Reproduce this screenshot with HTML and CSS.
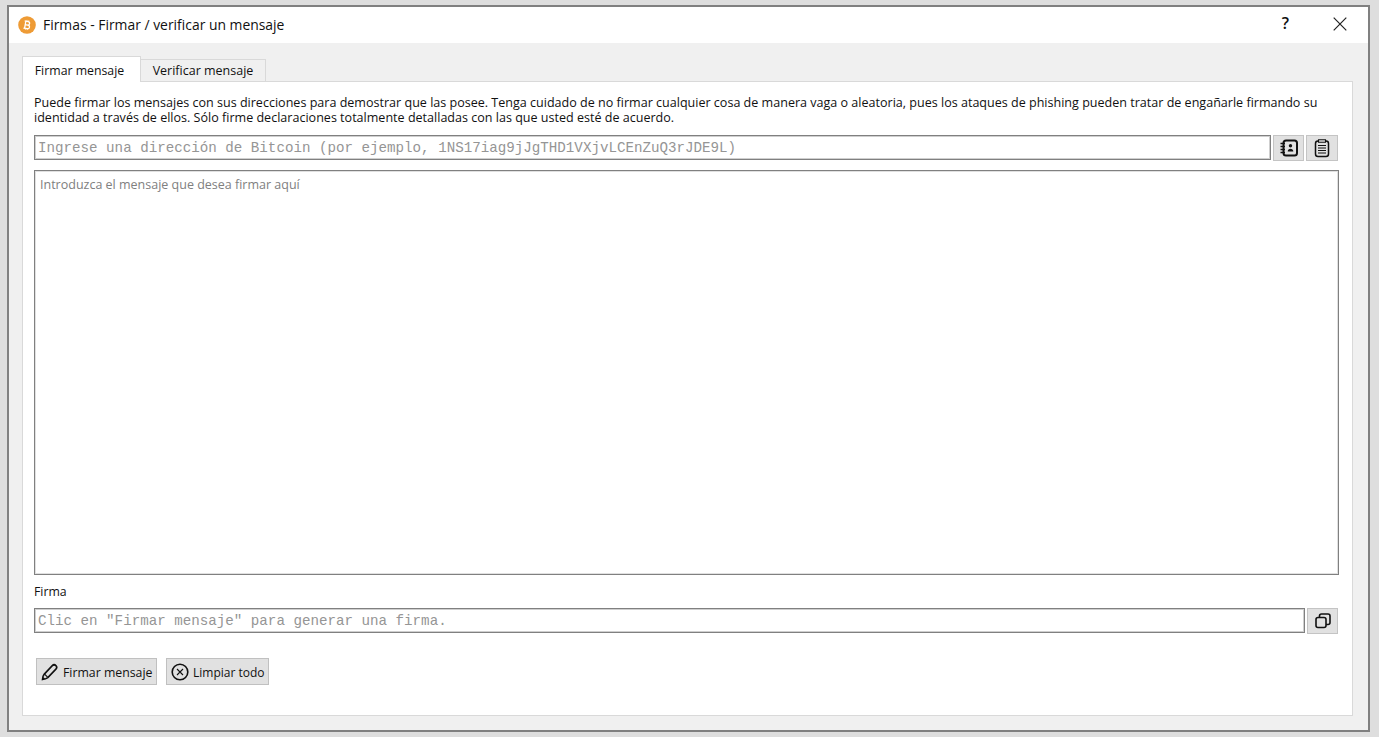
FILE: index.html
```html
<!DOCTYPE html>
<html lang="es">
<head>
<meta charset="utf-8">
<title>Firmas - Firmar / verificar un mensaje</title>
<link rel="stylesheet" href="styles.css">
</head>
<body>
<div class="window">
  <header class="titlebar">
    <svg class="app-icon" viewBox="0 0 18 18" width="18" height="18"><circle cx="9" cy="9" r="8.8" fill="#ee9b35"/><g transform="rotate(10 9 9)" fill="none" stroke="#fff" stroke-width="1.3"><path d="M7.2 5.2v7.6M6 5.4h3.5a1.8 1.8 0 0 1 0 3.6H7.2M7.2 9h2.8a1.8 1.8 0 0 1 0 3.6H6"/><path d="M8.2 4v1.4M10 4v1.4M8.2 12.6V14M10 12.6V14" stroke-width=".7"/></g></svg>
    <span class="title">Firmas - Firmar / verificar un mensaje</span>
    <span class="help">?</span>
    <svg class="close" viewBox="0 0 14 14" width="14" height="14"><path d="M.7.7l12.6 12.6M13.3.7L.7 13.3" stroke="#222" stroke-width="1.2" fill="none"/></svg>
  </header>
  <main class="content">
    <nav class="tabs">
      <div class="tab active">Firmar mensaje</div>
      <div class="tab">Verificar mensaje</div>
    </nav>
    <section class="pane">
      <p class="intro">Puede firmar los mensajes con sus direcciones para demostrar que las posee. Tenga cuidado de no firmar cualquier cosa de manera vaga o aleatoria, pues los ataques de phishing pueden tratar de engañarle firmando su identidad a través de ellos. Sólo firme declaraciones totalmente detalladas con las que usted esté de acuerdo.</p>
      <div class="row address-row">
        <div class="field mono">Ingrese una dirección de Bitcoin (por ejemplo, 1NS17iag9jJgTHD1VXjvLCEnZuQ3rJDE9L)</div>
        <button class="icon-btn" type="button">
          <svg viewBox="0 0 20 20" width="20" height="20" fill="none" stroke="#111"><rect x="4.5" y="2.5" width="13.5" height="15" rx="2.5" stroke-width="2"/><path d="M1.5 5.5h4.5M1.5 8.5h4.5M1.5 11.5h4.5M1.5 14.5h4.5" stroke-width="1.4"/><circle cx="11.5" cy="7.8" r="1.7" fill="#111" stroke="none"/><path d="M8.7 13.5c0-3.6 5.6-3.6 5.6 0z" fill="#111" stroke="none"/></svg>
        </button>
        <button class="icon-btn" type="button">
          <svg viewBox="0 0 20 20" width="20" height="20" fill="none" stroke="#111"><rect x="3.5" y="3" width="13" height="15.5" rx="2.5" stroke-width="1.5"/><path d="M6.5 1.8h7v2.4h-7z" fill="#e1e1e1" stroke-width="1.1"/><path d="M6 7.5h8M6 10h8M6 12.5h8M6 15h8" stroke-width="1"/></svg>
        </button>
      </div>
      <div class="message">Introduzca el mensaje que desea firmar aquí</div>
      <label class="sig-label">Firma</label>
      <div class="row sig-row">
        <div class="field mono">Clic en "Firmar mensaje" para generar una firma.</div>
        <button class="icon-btn" type="button">
          <svg viewBox="0 0 20 20" width="20" height="20" fill="none" stroke="#111" stroke-width="1.6"><rect x="3" y="6.5" width="10" height="10" rx="2"/><path d="M6.5 6.5V5a2 2 0 0 1 2-2H15a2 2 0 0 1 2 2v6.5a2 2 0 0 1-2 2h-2"/></svg>
        </button>
      </div>
      <div class="actions">
        <button class="btn btn-sign" type="button">
          <svg viewBox="0 0 18 18" width="18" height="18" fill="none" stroke="#111"><path d="M1.5 16.5c.1-2.2.8-4.2 1.8-5.4L11.3 2.6c1-1 2.6-1 3.6 0s1 2.5 0 3.5L6.8 14.6c-1.3 1-3.3 1.7-5.3 1.9z" stroke-width="1.6"/><path d="M3.6 11.2l3 3" stroke-width="1.2"/><path d="M1.5 16.5l2.6-.8-1.8-1.8z" fill="#111" stroke="none"/></svg>
          <span>Firmar mensaje</span>
        </button>
        <button class="btn btn-clear" type="button">
          <svg viewBox="0 0 18 18" width="18" height="18" fill="none" stroke="#111"><circle cx="9" cy="9" r="7.8" stroke-width="1.6"/><path d="M6 6l6 6M12 6l-6 6" stroke-width="1.1"/></svg>
          <span>Limpiar todo</span>
        </button>
      </div>
    </section>
  </main>
</div>
</body>
</html>
```
FILE: styles.css
```css
* { box-sizing: border-box; }
html, body { margin: 0; height: 100%; }
body {
  width: 1379px;
  height: 737px;
  overflow: hidden;
  padding: 5px 9px 5px 7px;
  background: #dedede;
  font-family: "Open Sans", "Liberation Sans", sans-serif;
  font-size: 12.3px;
  color: #111;
}
.window {
  width: 1363px;
  height: 727px;
  display: flex;
  flex-direction: column;
  border: 2px solid #808080;
  background: #f0f0f0;
}
.titlebar {
  height: 36px;
  flex: none;
  display: flex;
  align-items: center;
  padding: 0 21px 0 9px;
  background: #fff;
}
.app-icon { flex: none; }
.title { margin-left: 7px; font-size: 13.9px; flex: 1; position: relative; top: -1px; }
.help { font-size: 16px; font-weight: 600; margin-right: 44px; position: relative; top: -2px; }
.close { position: relative; top: -1px; }
.content { flex: 1; padding: 13px 15px 14px 13px; display: flex; flex-direction: column; min-height: 0; }
.tabs { display: flex; align-items: flex-end; height: 25px; flex: none; position: relative; z-index: 1; }
.tab {
  height: 22px;
  width: 125px;
  border: 1px solid #d9d9d9;
  border-bottom: 0;
  border-left: 0;
  background: #f0f0f0;
  font-size: 12.5px;
  text-align: center;
  line-height: 22px;
}
.tab.active {
  height: 26px;
  width: 119px;
  margin-bottom: -1px;
  background: #fff;
  border-left: 1px solid #d9d9d9;
  font-size: 12.3px;
  line-height: 27px;
  padding-right: 4px;
}
.pane {
  flex: 1;
  min-height: 0;
  background: #fff;
  border: 1px solid #d9d9d9;
  padding: 13px 14px 0 11px;
  display: flex;
  flex-direction: column;
}
.intro { margin: 0; font-size: 12.55px; line-height: 15px; height: 30px; width: 1290px; }
.row { display: flex; align-items: flex-start; gap: 2px; }
.address-row { margin-top: 10px; }
.field {
  flex: 1;
  height: 25px;
  border: 1px solid #808080;
  box-shadow: inset 0 0 0 1px #cfcfcf;
  background: #fff;
  padding-left: 3px;
  line-height: 24px;
  white-space: nowrap;
}
.mono { font-family: "Liberation Mono", monospace; font-size: 14.2px; color: #959595; }
.address-row .mono { padding-top: 0; }
.sig-row .mono { padding-top: 0; }
.icon-btn {
  flex: none;
  width: 31px;
  height: 26px;
  padding: 0;
  border: 1px solid #c4c4c4;
  background: #e1e1e1;
  display: flex;
  align-items: center;
  justify-content: center;
}
.address-row .icon-btn:last-child { width: 32px; }
.message {
  margin-top: 9px;
  height: 405px;
  width: 1305px;
  border: 1px solid #808080;
  box-shadow: inset 0 0 0 1px #e0e0e0;
  background: #fff;
  padding: 5px 5px;
  font-size: 12.5px;
  line-height: 18px;
  color: #808080;
}
.sig-label { margin-top: 8px; line-height: 17px; height: 17px; }
.sig-row { margin-top: 8px; }
.actions { display: flex; gap: 9px; margin-top: 24px; padding-left: 2px; }
.btn {
  height: 27px;
  padding: 0 3px 0 4px;
  border: 1px solid #c0c0c0;
  background: #e1e1e1;
  display: flex;
  align-items: center;
  gap: 4px;
  font: inherit;
  color: #111;
}
.btn span { position: relative; top: 1px; }
.btn-sign { width: 121px; }
.btn-clear { width: 103px; font-size: 12px; }
.btn svg { flex: none; }
```
